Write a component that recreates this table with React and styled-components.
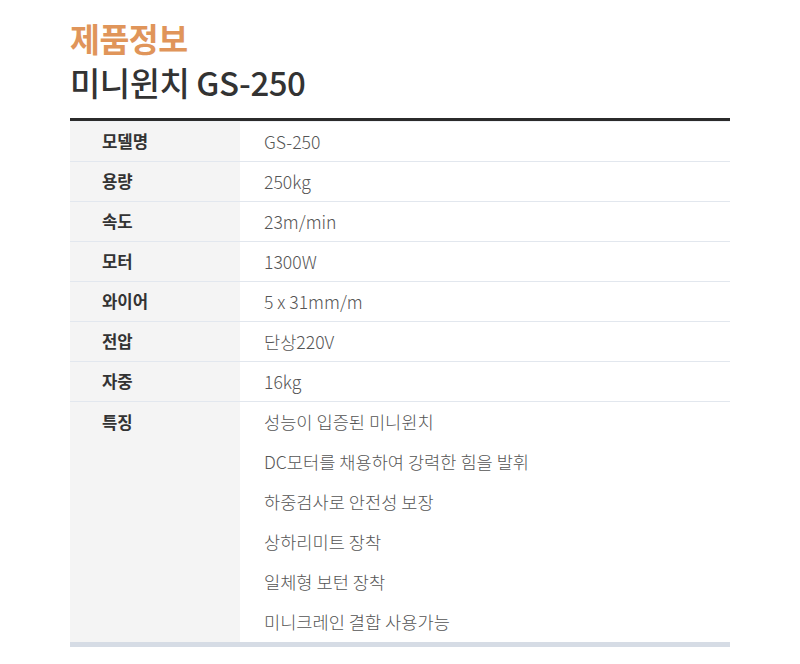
import React from 'react';
import styled, { createGlobalStyle } from 'styled-components';

const GlobalStyle = createGlobalStyle`
  body {
    margin: 0;
    background: #ffffff;
    font-family: "Noto Sans CJK KR", "Noto Sans", sans-serif;
  }
`;

const specs = [
  { label: '모델명', values: ['GS-250'] },
  { label: '용량', values: ['250kg'] },
  { label: '속도', values: ['23m/min'] },
  { label: '모터', values: ['1300W'] },
  { label: '와이어', values: ['5 x 31mm/m'] },
  { label: '전압', values: ['단상220V'] },
  { label: '자중', values: ['16kg'] },
  {
    label: '특징',
    values: [
      '성능이 입증된 미니윈치',
      'DC모터를 채용하여 강력한 힘을 발휘',
      '하중검사로 안전성 보장',
      '상하리미트 장착',
      '일체형 보턴 장착',
      '미니크레인 결합 사용가능',
    ],
  },
];

function App() {
  return (
    <>
      <GlobalStyle />
      <Page>
        <Heading>
          <Eyebrow>제품정보</Eyebrow>
          <ProductName>미니윈치 GS-250</ProductName>
        </Heading>

        <SpecTable>
          {specs.map((row) => (
            <Row key={row.label}>
              <Label>{row.label}</Label>
              <Values>
                {row.values.map((v) => (
                  <Value key={v}>{v}</Value>
                ))}
              </Values>
            </Row>
          ))}
        </SpecTable>
      </Page>
    </>
  );
}

const Page = styled.div`
  width: 660px;
  margin: 0 auto;
  padding-top: 16px;
`;

const Heading = styled.div`
  display: flex;
  flex-direction: column;
  margin-bottom: 14px;
`;

const Eyebrow = styled.h2`
  margin: 0;
  font-size: 32.5px;
  line-height: 44px;
  font-weight: 700;
  color: #e0955a;
  letter-spacing: -0.5px;
`;

const ProductName = styled.h1`
  margin: 0;
  font-size: 33px;
  line-height: 44px;
  font-weight: 500;
  color: #333333;
  letter-spacing: -0.5px;
`;

const SpecTable = styled.div`
  border-top: 3px solid #2b2b2b;
  border-bottom: 5px solid #d6dce5;
`;

const Row = styled.div`
  display: grid;
  grid-template-columns: 170px 1fr;
  border-top: 1px solid #e2e7ee;

  &:first-child {
    border-top: 1px solid #eef1f5;
  }
`;

const Label = styled.div`
  background: #f4f4f4;
  padding: 0 0 0 32px;
  height: 39px;
  line-height: 39px;
  font-size: 16.7px;
  font-weight: 700;
  color: #333333;

  ${Row}:last-child & {
    height: auto;
    line-height: 40px;
  }
`;

const Values = styled.div`
  display: flex;
  flex-direction: column;
  padding-left: 24px;
`;

const Value = styled.div`
  height: 39px;
  line-height: 39px;
  font-size: 17.6px;
  font-weight: 300;
  color: #555555;

  ${Row}:last-child & {
    height: 40px;
    line-height: 40px;
  }
`;

export default App;
